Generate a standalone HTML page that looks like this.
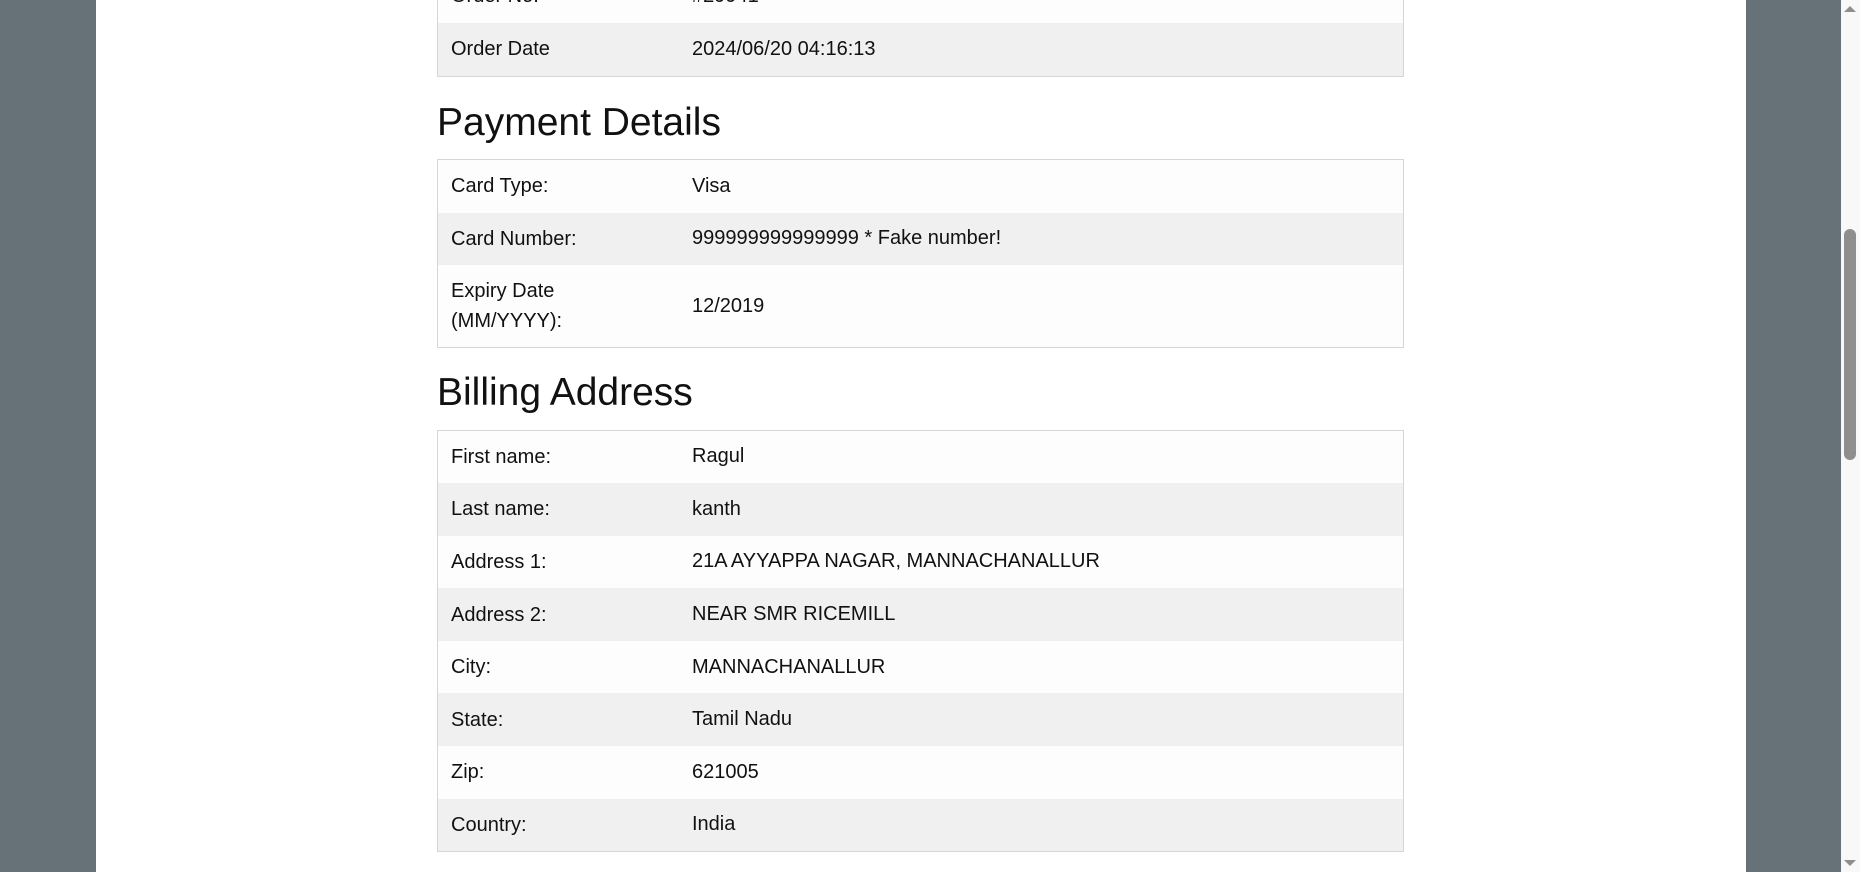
<!DOCTYPE html>
<html><head><style>
body{margin:0;width:1860px;height:872px;overflow:hidden;background:#677178;font-family:"Liberation Sans",sans-serif;color:#111;position:relative}
.page{position:absolute;left:96px;top:0;width:1650px;height:872px;background:#fff}
.sb{position:absolute;left:1841px;top:0;width:19px;height:872px;background:#f8f8f8}
.thumb{position:absolute;left:1844px;top:229px;width:12px;height:231px;background:#8e8e8e;border-radius:6px}
.tbl{position:absolute;left:437px;width:965px;border:1px solid #d6d6d6;box-sizing:content-box}
.r{display:flex;align-items:center;font-size:20px;background:#fdfdfd}
.r:nth-child(even){background:#f0f0f0}
.r .l{width:241px;flex:none;padding-left:13px;line-height:30px}
h2{position:absolute;left:437px;margin:0;font-weight:normal;font-size:39px;line-height:44px}
.tri{position:absolute;left:1844px;width:0;height:0;border-left:6px solid transparent;border-right:6px solid transparent}
</style></head><body>
<div class="page"></div>
<div class="tbl" style="top:-30px;border-top:none">
<div class="r" style="height:52.6px"><div class="l">Order No.</div><div class="v">#29941</div></div>
<div class="r" style="height:53px"><div class="l">Order Date</div><div class="v">2024/06/20 04:16:13</div></div>
</div>
<h2 style="top:101px">Payment Details</h2>
<div class="tbl" style="top:159px">
<div class="r" style="height:52.6px"><div class="l">Card Type:</div><div class="v">Visa</div></div>
<div class="r" style="height:52.6px"><div class="l">Card Number:</div><div class="v">999999999999999 * Fake number!</div></div>
<div class="r" style="height:82px"><div class="l">Expiry Date<br>(MM/YYYY):</div><div class="v">12/2019</div></div>
</div>
<h2 style="top:371px">Billing Address</h2>
<div class="tbl" style="top:429.5px">
<div class="r" style="height:52.6px"><div class="l">First name:</div><div class="v">Ragul</div></div>
<div class="r" style="height:52.6px"><div class="l">Last name:</div><div class="v">kanth</div></div>
<div class="r" style="height:52.6px"><div class="l">Address 1:</div><div class="v">21A AYYAPPA NAGAR, MANNACHANALLUR</div></div>
<div class="r" style="height:52.6px"><div class="l">Address 2:</div><div class="v">NEAR SMR RICEMILL</div></div>
<div class="r" style="height:52.6px"><div class="l">City:</div><div class="v">MANNACHANALLUR</div></div>
<div class="r" style="height:52.6px"><div class="l">State:</div><div class="v">Tamil Nadu</div></div>
<div class="r" style="height:52.6px"><div class="l">Zip:</div><div class="v">621005</div></div>
<div class="r" style="height:52.6px"><div class="l">Country:</div><div class="v">India</div></div>
</div>
<div class="sb"></div>
<div class="thumb"></div>
<div class="tri" style="top:6px;border-bottom:6px solid #8e8e8e"></div>
<div class="tri" style="top:860px;border-top:6px solid #8e8e8e"></div>
</body></html>
